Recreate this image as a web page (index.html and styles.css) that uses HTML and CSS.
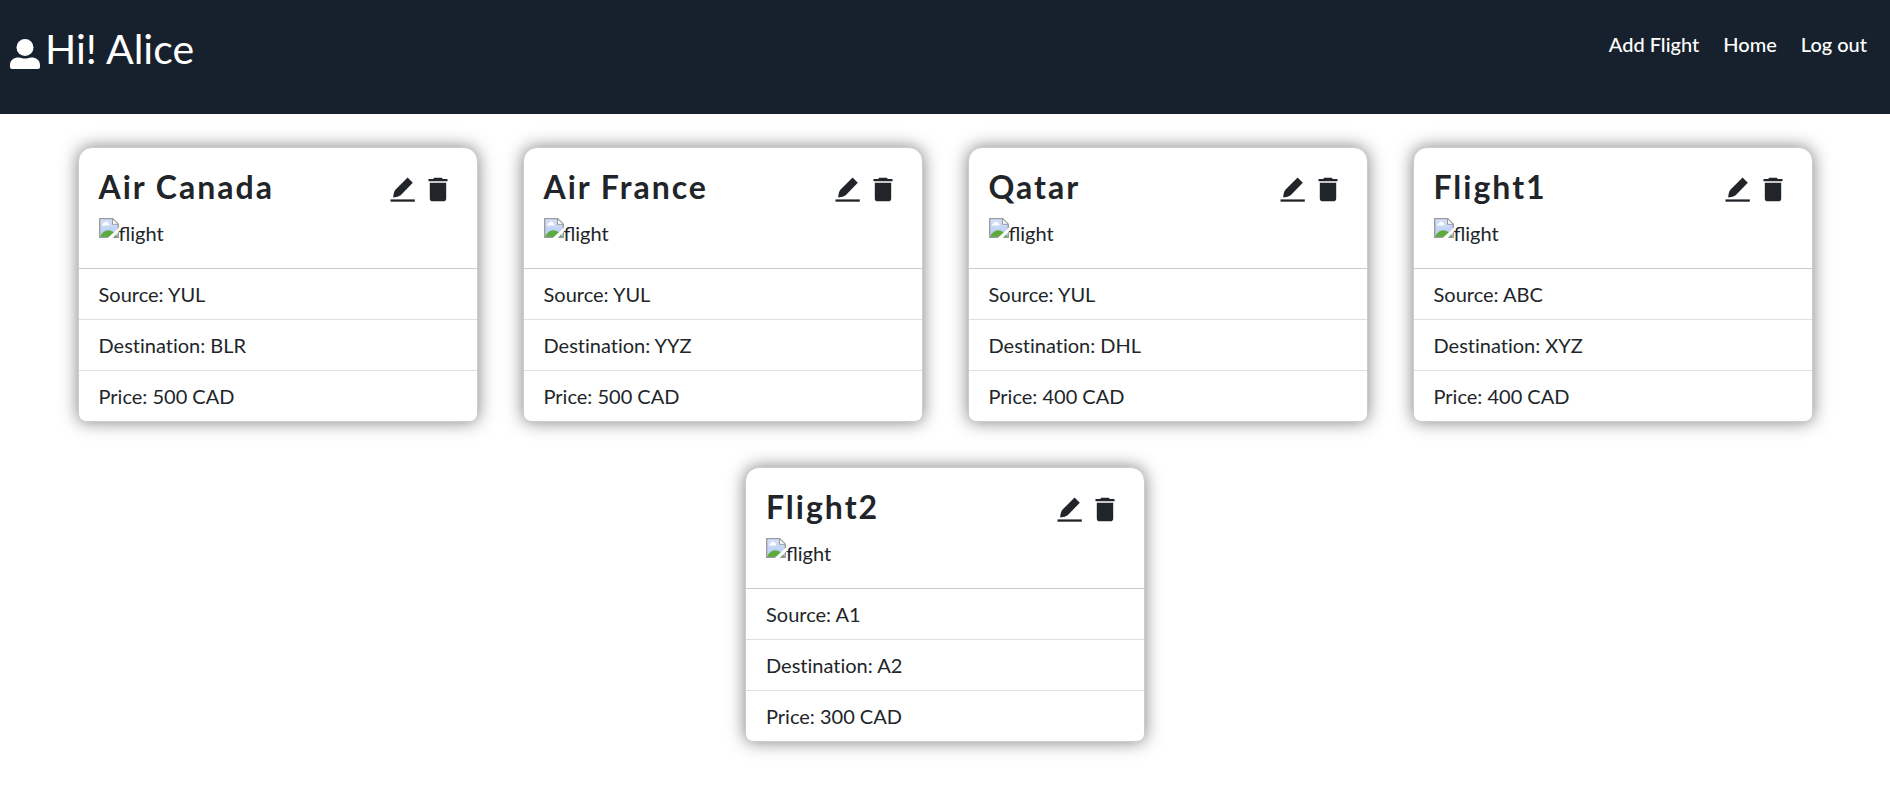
FILE: index.html
```html
<!DOCTYPE html>
<html lang="en">
<head>
<meta charset="utf-8">
<title>Flights</title>
<link rel="stylesheet" href="styles.css">
</head>
<body>
<svg class="sprite" aria-hidden="true">
  <defs>
    <linearGradient id="sky" x1="0" y1="0" x2="0" y2="1"><stop offset="0" stop-color="#d4e1fa"/><stop offset="1" stop-color="#b5caf3"/></linearGradient>
    <symbol id="edit" viewBox="0 0 25 25">
      <path d="M17.6.6 22.8 5.8 10.7 18.2Q8.5 19.9 3.2 20.4Q3.5 15 5.4 12.8Z"/>
      <path d="M.5 22.4H24.8V24.7H.5Z"/>
    </symbol>
    <symbol id="trash" viewBox="0 0 20 25">
      <path d="M.5 2H5.2L6.2.8H13.8L14.8 2H19.5V4.2H.5Z"/>
      <path d="M1.8 5.8H18.2V21.4A2.8 2.8 0 0 1 15.4 24.2H4.6A2.8 2.8 0 0 1 1.8 21.4Z"/>
    </symbol>
    <symbol id="broken" viewBox="0 0 20 20">
      <path fill="url(#sky)" d="M.5.5H14L19.5 6V19.5H.5Z"/>
      <path fill="#fff" d="M3 7.2a2 2 0 0 1 2-2a2.3 2.3 0 0 1 4.300 0a1.500 1.500 0 0 1 .7 2.300H3Z"/>
      <path fill="#5bab3d" d="M1 19Q4 12.300 9 12.300Q15 12.300 18.500 19Z"/>
      <path fill="none" stroke="#9a9a9a" stroke-width="1.300" d="M.7.7H13.700L19.300 6.300V19.300H.7Z"/>
      <path fill="#fff" stroke="#9a9a9a" d="M13.500.7V6.300H19.300Z"/>
      <path fill="#fff" d="M8.500 20.200 20.200 9.200V13.300L13.500 20.200Z"/>
    </symbol>
  </defs>
</svg>
<header class="topbar">
  <div class="greeting">
    <svg class="user" viewBox="0 0 30 30" aria-hidden="true"><circle cx="15" cy="8.5" r="8.500"/><path d="M0 28V26C0 21 4 18.500 8.500 18.500C11 18.500 12 19.600 15 19.600S19 18.500 21.500 18.500C26 18.500 30 21 30 26V28Q30 30 28 30H2Q0 30 0 28Z"/></svg>
    <h1 class="hello">Hi! Alice</h1>
  </div>
  <nav class="links">
    <a href="#">Add Flight</a>
    <a href="#">Home</a>
    <a href="#">Log out</a>
  </nav>
</header>
<main class="cards">
  <article class="card">
    <div class="card-body">
      <div class="card-head"><h2>Air Canada</h2><div class="actions"><button aria-label="Edit"><svg class="edit"><use href="#edit"/></svg></button><button aria-label="Delete"><svg class="trash"><use href="#trash"/></svg></button></div></div>
      <div class="photo"><svg class="broken"><use href="#broken"/></svg><span>flight</span></div>
    </div>
    <ul class="details"><li>Source: YUL</li><li>Destination: BLR</li><li>Price: 500 CAD</li></ul>
  </article>
  <article class="card">
    <div class="card-body">
      <div class="card-head"><h2>Air France</h2><div class="actions"><button aria-label="Edit"><svg class="edit"><use href="#edit"/></svg></button><button aria-label="Delete"><svg class="trash"><use href="#trash"/></svg></button></div></div>
      <div class="photo"><svg class="broken"><use href="#broken"/></svg><span>flight</span></div>
    </div>
    <ul class="details"><li>Source: YUL</li><li>Destination: YYZ</li><li>Price: 500 CAD</li></ul>
  </article>
  <article class="card">
    <div class="card-body">
      <div class="card-head"><h2>Qatar</h2><div class="actions"><button aria-label="Edit"><svg class="edit"><use href="#edit"/></svg></button><button aria-label="Delete"><svg class="trash"><use href="#trash"/></svg></button></div></div>
      <div class="photo"><svg class="broken"><use href="#broken"/></svg><span>flight</span></div>
    </div>
    <ul class="details"><li>Source: YUL</li><li>Destination: DHL</li><li>Price: 400 CAD</li></ul>
  </article>
  <article class="card">
    <div class="card-body">
      <div class="card-head"><h2>Flight1</h2><div class="actions"><button aria-label="Edit"><svg class="edit"><use href="#edit"/></svg></button><button aria-label="Delete"><svg class="trash"><use href="#trash"/></svg></button></div></div>
      <div class="photo"><svg class="broken"><use href="#broken"/></svg><span>flight</span></div>
    </div>
    <ul class="details"><li>Source: ABC</li><li>Destination: XYZ</li><li>Price: 400 CAD</li></ul>
  </article>
  <article class="card">
    <div class="card-body">
      <div class="card-head"><h2>Flight2</h2><div class="actions"><button aria-label="Edit"><svg class="edit"><use href="#edit"/></svg></button><button aria-label="Delete"><svg class="trash"><use href="#trash"/></svg></button></div></div>
      <div class="photo"><svg class="broken"><use href="#broken"/></svg><span>flight</span></div>
    </div>
    <ul class="details"><li>Source: A1</li><li>Destination: A2</li><li>Price: 300 CAD</li></ul>
  </article>
</main>
</body>
</html>
```

FILE: styles.css
```css
* { box-sizing: border-box; }
body {
  margin: 0;
  background: #fff;
  color: #212529;
  font: 20px/30px Lato, sans-serif;
}
.sprite { position: absolute; width: 0; height: 0; }
.topbar {
  display: flex;
  justify-content: space-between;
  align-items: flex-start;
  padding: 19px 23px 35px 10px;
  background: #17212d;
  color: #fff;
}
.greeting { display: flex; align-items: flex-end; gap: 5px; }
.user { width: 30px; height: 30px; margin-bottom: 10px; fill: #fff; }
.hello { margin: 0; font-size: 41px; line-height: 60px; font-weight: 400; }
.links { display: flex; gap: 24px; padding-top: 10px; }
.links a { color: #fff; text-decoration: none; font-weight: 500; }
.cards {
  display: flex;
  flex-wrap: wrap;
  justify-content: center;
  gap: 45px;
  padding: 33px 40px;
}
.card {
  width: 400px;
  border: 1px solid #cccccc;
  border-radius: 14px 14px 8px 8px;
  background: #fff;
  box-shadow: 0 0 17px rgba(0, 0, 0, 0.5);
}
.card-body { padding: 20px 20px 18px; }
.card-head { display: flex; justify-content: space-between; align-items: flex-start; }
.card-head h2 {
  margin: 0;
  font-size: 32px;
  line-height: 38px;
  font-weight: 700;
  letter-spacing: 2px;
}
.actions { display: flex; gap: 13px; padding: 9px 9px 0 0; }
.actions button { display: flex; margin: 0; padding: 0; border: 0; background: none; cursor: pointer; }
.edit { width: 25px; height: 25px; fill: #212529; }
.trash { width: 20px; height: 25px; fill: #212529; }
.photo { display: flex; align-items: flex-start; padding-top: 12px; height: 44px; }
.photo span { line-height: 30px; }
.broken { width: 20px; height: 20px; }
.details { margin: 0; padding: 0; list-style: none; border-top: 1px solid #cccccc; font-variant-ligatures: none; }
.details li { padding: 10px 20px; }
.details li + li { border-top: 1px solid #dedfe1; }
```
